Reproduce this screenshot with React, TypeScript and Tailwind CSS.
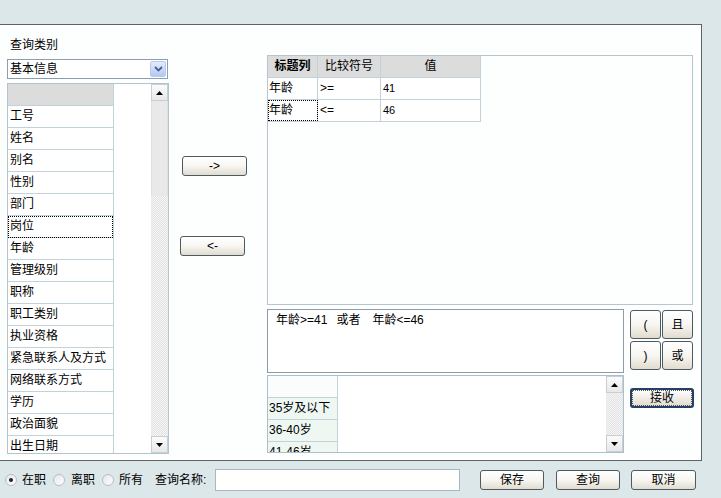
import React from "react";

const FONT = "font-['Liberation_Sans','Noto_Sans_CJK_SC',sans-serif]";

function Btn({ children, className = "" }: { children: React.ReactNode; className?: string }) {
  return (
    <div
      className={`flex items-center justify-center rounded-[3px] border border-[#4c5a64] bg-linear-to-b from-white via-[#f7f6f2] to-[#e2dccf] text-[12px] text-black ${className}`}
    >
      {children}
    </div>
  );
}

function Arrow({ dir }: { dir: "up" | "down" }) {
  return (
    <svg width="7" height="4" viewBox="0 0 7 4">
      {dir === "up" ? <polygon points="0,4 7,4 3.5,0" fill="#000" /> : <polygon points="0,0 7,0 3.5,4" fill="#000" />}
    </svg>
  );
}

function SbBtn({ dir }: { dir: "up" | "down" }) {
  return (
    <div className="flex h-[17px] w-[17px] items-center justify-center border border-[#c8cfd4] bg-linear-to-b from-[#fbfbfb] to-[#e8e8e8]">
      <Arrow dir={dir} />
    </div>
  );
}

const hatch =
  "bg-[repeating-conic-gradient(#f6f6f6_0_25%,#e2e2e2_0_50%)] bg-[length:2px_2px]";

function Radio({ checked }: { checked?: boolean }) {
  return (
    <span className="flex h-[12px] w-[12px] items-center justify-center rounded-full border border-[#b3c0c8] bg-linear-to-br from-[#e3e6e8] to-white">
      {checked && <span className="h-[4px] w-[4px] rounded-full bg-[#222]" />}
    </span>
  );
}

const fields = [
  "工号",
  "姓名",
  "别名",
  "性别",
  "部门",
  "岗位",
  "年龄",
  "管理级别",
  "职称",
  "职工类别",
  "执业资格",
  "紧急联系人及方式",
  "网络联系方式",
  "学历",
  "政治面貌",
  "出生日期",
];

export default function App() {
  return (
    <div className={`flex h-[498px] w-[721px] flex-col overflow-hidden bg-[#dce7e9] text-[12px] text-black ${FONT}`}>
      <div className="h-[24px] shrink-0" />
      {/* main panel */}
      <div className="flex h-[437px] w-[702px] shrink-0 border-t border-r border-b border-[#5e6366] bg-[#fdfefe]">
        {/* left column */}
        <div className="flex w-[169px] shrink-0 flex-col pl-[7px]">
          <div className="mt-[12px] h-[16px] pl-[3px] leading-[16px]">查询类别</div>
          <div className="mt-[6px] flex h-[20px] w-[161px] items-center border border-[#8aa0b0] bg-white">
            <span className="flex-1 pl-[2px] text-[12px] leading-[18px]">基本信息</span>
            <span className="mr-[1px] flex h-[16px] w-[16px] items-center justify-center rounded-[2px] border border-[#b9c9ee] bg-linear-to-b from-[#e3ebfd] to-[#b5c8f2]">
              <svg width="9" height="6" viewBox="0 0 9 6">
                <polyline points="1,1 4.5,4.5 8,1" fill="none" stroke="#4a5f8e" strokeWidth="1.8" />
              </svg>
            </span>
          </div>
          <div className="mt-[4px] flex h-[371px] w-[162px] overflow-hidden border border-[#b4c4cc] bg-white">
            <div className="flex w-[106px] shrink-0 flex-col border-r border-[#c2d2da]">
              <div className="h-[22px] shrink-0 border-b border-[#c2d2da] bg-[#dcdcdc]" />
              {fields.map((f) => (
                <div
                  key={f}
                  className={`h-[22px] shrink-0 border-b border-[#c2d2da] pl-[2px] leading-[21px] ${
                    f === "岗位" ? "outline-1 -outline-offset-1 outline-dotted outline-black" : ""
                  }`}
                >
                  {f}
                </div>
              ))}
            </div>
            <div className="flex-1" />
            <div className="flex w-[17px] shrink-0 flex-col">
              <SbBtn dir="up" />
              <div className="h-[95px] shrink-0 border-x border-[#e0e0e0] bg-[#e9e9e9]" />
              <div className={`flex-1 ${hatch}`} />
              <SbBtn dir="down" />
            </div>
          </div>
        </div>

        {/* middle column */}
        <div className="flex w-[98px] shrink-0 flex-col">
          <Btn className="ml-[13px] mt-[131px] h-[20px] w-[65px]">-&gt;</Btn>
          <Btn className="ml-[11px] mt-[60px] h-[20px] w-[65px]">&lt;-</Btn>
        </div>

        {/* right column */}
        <div className="flex w-[427px] shrink-0 flex-col pt-[30px]">
          <div className="h-[250px] w-[426px] border border-[#b7c6ce] bg-[#fdfefe]">
            <div className="flex w-[213px] flex-col">
              <div className="flex h-[22px] border-b border-[#c2d2da] bg-[#dcdcdc]">
                <div className="w-[50px] border-r border-[#c2d2da] text-center font-bold leading-[21px]">标题列</div>
                <div className="w-[63px] border-r border-[#c2d2da] text-center leading-[21px]">比较符号</div>
                <div className="w-[100px] border-r border-[#c2d2da] text-center leading-[21px]">值</div>
              </div>
              <div className="flex h-[22px] border-b border-[#c2d2da] bg-white">
                <div className="w-[50px] border-r border-[#c2d2da] pl-[1px] leading-[21px]">年龄</div>
                <div className="w-[63px] border-r border-[#c2d2da] pl-[2px] leading-[21px]">&gt;=</div>
                <div className="w-[100px] border-r border-[#c2d2da] pl-[2px] text-[11px] leading-[21px]">41</div>
              </div>
              <div className="flex h-[22px] border-b border-[#c2d2da] bg-white">
                <div className="w-[50px] border-r border-[#c2d2da] pl-[1px] leading-[21px] outline-1 -outline-offset-1 outline-dotted outline-black">
                  年龄
                </div>
                <div className="w-[63px] border-r border-[#c2d2da] pl-[2px] leading-[21px]">&lt;=</div>
                <div className="w-[100px] border-r border-[#c2d2da] pl-[2px] text-[11px] leading-[21px]">46</div>
              </div>
            </div>
          </div>

          <div className="mt-[4px] flex">
            <div className="flex h-[64px] w-[357px] shrink-0 border border-[#8e9ca5] bg-white pl-[8px] pt-[3px]">
              <span className="leading-[14px]">年龄&gt;=41</span>
              <span className="ml-[9px] leading-[14px]">或者</span>
              <span className="ml-[12px] leading-[14px]">年龄&lt;=46</span>
            </div>
            <div className="ml-[6px] mt-[1px] grid grid-cols-[31px_31px] grid-rows-[29px_29px] gap-x-[1px] gap-y-[2px]">
              <Btn>(</Btn>
              <Btn>且</Btn>
              <Btn>)</Btn>
              <Btn>或</Btn>
            </div>
          </div>

          <div className="mt-[2px] flex">
            <div className="flex h-[78px] w-[357px] shrink-0 overflow-hidden border border-[#adbfc8] bg-white">
              <div className="flex w-[70px] shrink-0 flex-col border-r border-[#c2d2da]">
                <div className="h-[22px] shrink-0 border-b border-[#c2d2da] bg-[#fbfdfc]" />
                {["35岁及以下", "36-40岁", "41-46岁"].map((t) => (
                  <div key={t} className="h-[22px] shrink-0 border-b border-[#c2d2da] bg-[#eef7f2] pl-[1px] leading-[21px]">
                    {t}
                  </div>
                ))}
              </div>
              <div className="flex-1" />
              <div className="flex w-[17px] shrink-0 flex-col">
                <SbBtn dir="up" />
                <div className={`flex-1 ${hatch}`} />
                <SbBtn dir="down" />
              </div>
            </div>
            <div className="ml-[6px] mt-[13px] flex h-[20px] w-[64px] items-center justify-center rounded-[3px] border-2 border-[#263f66] bg-linear-to-b from-white to-[#e2dccf] p-[1px]">
              <div className="flex h-full w-full items-center justify-center outline-1 outline-dotted outline-[#555]">接收</div>
            </div>
          </div>
        </div>
      </div>

      {/* bottom bar */}
      <div className="flex flex-1 items-center pl-[5px]">
        <Radio checked />
        <span className="ml-[5px]">在职</span>
        <span className="ml-[7px]">
          <Radio />
        </span>
        <span className="ml-[6px]">离职</span>
        <span className="ml-[7px]">
          <Radio />
        </span>
        <span className="ml-[5px]">所有</span>
        <span className="ml-[12px] w-[60px]">查询名称:</span>
        <div className="h-[22px] w-[245px] border border-[#a8b8c2] bg-white" />
        <Btn className="ml-[20px] h-[20px] w-[64px]">保存</Btn>
        <Btn className="ml-[12px] h-[20px] w-[64px]">查询</Btn>
        <Btn className="ml-[11px] h-[20px] w-[65px]">取消</Btn>
      </div>
    </div>
  );
}
